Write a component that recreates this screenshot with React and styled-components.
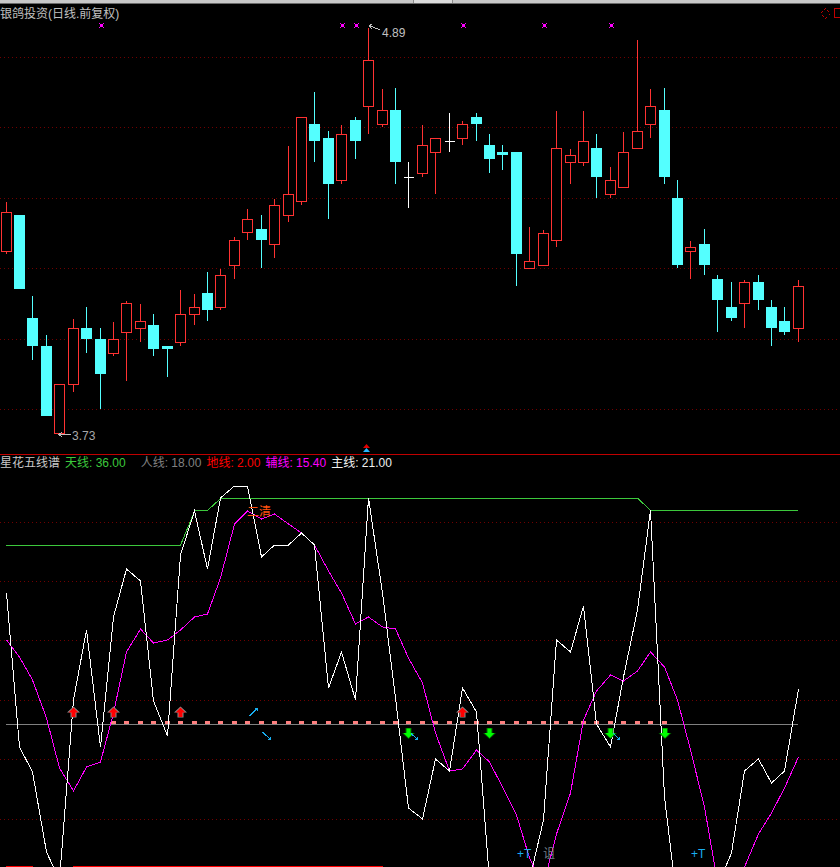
import React from "react";
import styled, { createGlobalStyle } from "styled-components";

const GlobalStyle = createGlobalStyle`
  html, body {
    margin: 0;
    padding: 0;
    background: #000;
  }
`;

const RED = "#ff3232";
const CYAN = "#54ffff";
const FONT = `"Liberation Sans", "Noto Sans CJK SC", sans-serif`;

// [x, body-top, body-bottom, wick-top, wick-bottom, kind]
const candles = [
  [6.5, 212, 252, 202, 254, "u"], [19.5, 215, 289, 215, 289, "d"], [32.5, 318, 346, 296, 360, "d"],
  [46.5, 346, 416, 335, 416, "d"], [59.5, 384, 434, 384, 434, "u"], [73.5, 328, 385, 319, 392, "u"],
  [86.5, 328, 339, 307, 353, "d"], [100.5, 339, 374, 328, 409, "d"], [113.5, 339, 354, 322, 356, "u"],
  [126.5, 303, 333, 301, 381, "u"], [140.5, 321, 329, 304, 342, "u"], [153.5, 325, 349, 314, 356, "d"],
  [167.5, 346, 349, 346, 377, "d"], [180.5, 314, 343, 290, 346, "u"], [194.5, 307, 315, 294, 325, "u"],
  [207.5, 293, 310, 272, 321, "d"], [220.5, 275, 308, 269, 310, "u"], [234.5, 240, 266, 237, 279, "u"],
  [247.5, 219, 233, 209, 240, "u"], [261.5, 229, 240, 215, 268, "d"], [274.5, 205, 245, 199, 258, "u"],
  [288.5, 194, 216, 146, 222, "u"], [301.5, 117, 202, 117, 205, "u"], [314.5, 124, 141, 92, 162, "d"],
  [328.5, 138, 184, 131, 219, "d"], [341.5, 134, 181, 125, 184, "u"], [355.5, 120, 141, 117, 159, "d"],
  [368.5, 60, 107, 28, 134, "u"], [382.5, 110, 125, 89, 127, "u"], [395.5, 110, 162, 88, 184, "d"],
  [408.5, 177, 177, 162, 208, "n"], [422.5, 145, 174, 125, 177, "u"], [435.5, 138, 153, 138, 194, "u"],
  [449.5, 141, 141, 113, 152, "n"], [462.5, 124, 139, 121, 145, "u"], [476.5, 117, 124, 113, 141, "d"],
  [489.5, 145, 159, 134, 173, "d"], [502.5, 152, 155, 145, 170, "d"], [516.5, 152, 254, 152, 286, "d"],
  [529.5, 261, 269, 227, 269, "u"], [543.5, 233, 266, 230, 266, "u"], [556.5, 148, 241, 111, 247, "u"],
  [570.5, 155, 163, 149, 184, "u"], [583.5, 141, 163, 111, 166, "u"], [596.5, 148, 177, 134, 198, "d"],
  [610.5, 180, 195, 167, 198, "u"], [623.5, 152, 188, 132, 188, "u"], [637.5, 131, 149, 40, 149, "u"],
  [650.5, 106, 125, 89, 138, "u"], [664.5, 110, 177, 88, 184, "d"], [677.5, 198, 265, 180, 268, "d"],
  [690.5, 247, 252, 241, 279, "u"], [704.5, 244, 265, 229, 275, "d"], [717.5, 279, 300, 275, 332, "d"],
  [731.5, 307, 318, 282, 321, "d"], [744.5, 282, 304, 280, 328, "u"], [758.5, 282, 300, 275, 310, "d"],
  [771.5, 307, 328, 300, 346, "d"], [784.5, 321, 332, 307, 335, "d"], [798.5, 286, 329, 280, 342, "u"],
];

const xs = candles.map((c) => c[0]);

const mainLine = [
  593, 747, 772, 852, 880, 700, 630, 747, 617, 569, 581, 701, 736, 555, 511, 569, 498, 486, 486, 557,
  545, 545, 533, 545, 688, 652, 700, 498, 593, 698, 808, 819, 759, 771, 688, 712, 880, 890, 890, 880,
  820, 640, 652, 606, 724, 747, 677, 610, 510, 797, 906, 900, 900, 886, 853, 771, 759, 783, 771, 689,
];

const auxLine = [
  640, 657, 680, 718, 768, 791, 767, 762, 713, 652, 629, 643, 640, 630, 617, 614, 578, 524, 511, 519,
  514, 524, 533, 545, 571, 593, 624, 617, 627, 629, 658, 683, 733, 771, 769, 750, 762, 787, 815, 858,
  885, 834, 793, 720, 691, 675, 681, 671, 652, 667, 700, 750, 807, 882, 900, 867, 834, 813, 788, 757,
];

const heavenLine = "6,545 180.5,545 195,510.5 207.5,510.5 220.5,498.5 638,498.5 650.5,510.5 798,510.5";

const priceGrid = [57.5, 127.5, 198.5, 268.5, 339.5, 409.5];
const indicatorGrid = [522.5, 581.5, 640.5, 700.5, 759.5, 819.5];
const magentaMarks = [101, 342, 356, 463, 544, 611];
const upArrows = [73.5, 113.5, 180.5, 462.5];
const downArrows = [408.5, 489.5, 610.5, 665];

const toPoints = (ys) => ys.map((y, i) => `${xs[i]},${y}`).join(" ");

const arrowPoints = (x, tip, dir, head, shaft, headLen, len) =>
  [
    [x, tip],
    [x + head, tip + dir * headLen],
    [x + shaft, tip + dir * headLen],
    [x + shaft, tip + dir * len],
    [x - shaft, tip + dir * len],
    [x - shaft, tip + dir * headLen],
    [x - head, tip + dir * headLen],
  ]
    .map((p) => p.join(","))
    .join(" ");

const Frame = styled.div`
  width: 840px;
  height: 867px;
  background: #000;
  overflow: hidden;
  display: flex;
  flex-direction: column;
  font-family: ${FONT};
`;

const TitleStrip = styled.div`
  height: 4px;
  flex: none;
  display: flex;
  background: #c8c8c8;
  border-bottom: 1px solid #6a6a6a;
  box-sizing: border-box;
`;

const StripTab = styled.div`
  width: 38px;
  margin-left: 413px;
  background: #dcdcdc;
  border-left: 1px solid #8c8c8c;
  border-right: 1px solid #8c8c8c;
`;

const PricePane = styled.div`
  position: relative;
  height: 450px;
  flex: none;
`;

const PaneTitle = styled.div`
  position: absolute;
  left: 0;
  top: 3px;
  font-size: 12px;
  line-height: 15px;
  color: #c0c0c0;
  white-space: nowrap;
`;

const Chart = styled.svg`
  display: block;
  width: 840px;
  height: ${(p) => p.$height}px;
`;

const ChartLabel = styled.text`
  font-family: ${FONT};
  font-size: ${(p) => p.$size || 12}px;
  fill: ${(p) => p.$color || "#c0c0c0"};
`;

const GridLine = styled.line`
  stroke: #700000;
  stroke-dasharray: 1 3;
`;

const IndicatorPane = styled.div`
  flex: none;
  border-top: 1px solid #c00000;
`;

const Legend = styled.div`
  display: flex;
  align-items: flex-end;
  height: 16px;
  font-size: 12px;
  line-height: 15px;
  white-space: nowrap;
`;

const LegendName = styled.span`
  color: #c8c8c8;
  width: 65px;
  flex: none;
`;

const LegendItem = styled.span`
  color: ${(p) => p.$color};
  margin-right: ${(p) => p.$gap}px;
`;

function Candle({ data }) {
  const [x, y1, y2, w1, w2, kind] = data;
  if (kind === "n") {
    return (
      <g stroke="#fff" shapeRendering="crispEdges">
        <line x1={x} x2={x} y1={w1} y2={w2} />
        <line x1={x - 5} x2={x + 5} y1={y1 + 0.5} y2={y1 + 0.5} />
      </g>
    );
  }
  const bx = Math.floor(x) - 5;
  if (kind === "d") {
    return (
      <g shapeRendering="crispEdges">
        <line x1={x} x2={x} y1={w1} y2={w2} stroke={CYAN} />
        <rect x={bx} y={y1} width={11} height={y2 - y1} fill={CYAN} />
      </g>
    );
  }
  return (
    <g shapeRendering="crispEdges" stroke={RED}>
      <line x1={x} x2={x} y1={w1} y2={y1} />
      <line x1={x} x2={x} y1={y2} y2={w2} />
      <rect x={bx + 0.5} y={y1 + 0.5} width={10} height={y2 - y1 - 1} fill="#000" />
    </g>
  );
}

function Mark({ x, y }) {
  return (
    <g fill="#ff00ff" shapeRendering="crispEdges">
      <rect x={x - 1} y={y - 1} width={3} height={3} />
      <rect x={x - 2} y={y - 2} width={1} height={1} />
      <rect x={x + 2} y={y - 2} width={1} height={1} />
      <rect x={x - 2} y={y + 2} width={1} height={1} />
      <rect x={x + 2} y={y + 2} width={1} height={1} />
    </g>
  );
}

function UpArrow({ x, y }) {
  return (
    <g>
      <polygon points={arrowPoints(x, y, 1, 6.5, 3, 6, 11)} fill="#8c8c8c" />
      <polygon points={arrowPoints(x, y + 1, 1, 5, 2, 5, 9.5)} fill="#ff0000" />
    </g>
  );
}

function DownArrow({ x, y }) {
  return (
    <g>
      <polygon points={arrowPoints(x, y + 11, -1, 6.5, 3, 6, 11)} fill="#006400" />
      <polygon points={arrowPoints(x, y + 10, -1, 5, 2, 5, 9.5)} fill="#00ff00" />
    </g>
  );
}

function SlantArrow({ x1, y1, x2, y2, up }) {
  const hy = up ? y2 + 3 : y2 - 3;
  return (
    <g stroke="#18aef0" fill="none" shapeRendering="crispEdges">
      <line x1={x1} y1={y1} x2={x2} y2={y2} />
      <polyline points={`${x2 - 3},${y2} ${x2},${y2} ${x2},${hy}`} />
    </g>
  );
}

export default function App() {
  return (
    <>
      <GlobalStyle />
      <Frame>
        <TitleStrip>
          <StripTab />
        </TitleStrip>
        <PricePane>
          <PaneTitle>银鸽投资(日线.前复权)</PaneTitle>
          <Chart $height={450} viewBox="0 4 840 450">
            {priceGrid.map((y) => (
              <GridLine key={y} x1="0" x2="840" y1={y} y2={y} />
            ))}
            {candles.map((c) => (
              <Candle key={c[0]} data={c} />
            ))}
            {magentaMarks.map((x) => (
              <Mark key={x} x={x} y={25} />
            ))}
            <g stroke="#c0c0c0" fill="none" shapeRendering="crispEdges">
              <polyline points="380,30 373,27 369,26" />
              <polyline points="372,24 369,26 372,29" />
              <line x1="59" x2="71" y1="434.5" y2="434.5" />
              <polyline points="62,432 59,434.5 62,437" />
            </g>
            <ChartLabel x="382" y="37">4.89</ChartLabel>
            <ChartLabel x="72" y="440" $color="#a8a8a8">3.73</ChartLabel>
            <polygon points="366.5,444 370,448 363,448" fill="#e00000" />
            <polygon points="366.5,448 370,452 363,452" fill="#28b4ff" />
            <g fill="none" stroke="#c00000" shapeRendering="crispEdges">
              <polygon points="825.5,8.5 830.5,13.5 825.5,18.5 820.5,13.5" strokeDasharray="1 1" />
              <rect x="834.5" y="8.5" width="8" height="9" />
            </g>
          </Chart>
        </PricePane>
        <IndicatorPane>
          <Legend>
            <LegendName>星花五线谱</LegendName>
            <LegendItem $color="#3cc83c" $gap={15}>天线: 36.00</LegendItem>
            <LegendItem $color="#808080" $gap={5}>人线: 18.00</LegendItem>
            <LegendItem $color="#ff0000" $gap={5}>地线: 2.00</LegendItem>
            <LegendItem $color="#ff00ff" $gap={5}>辅线: 15.40</LegendItem>
            <LegendItem $color="#f0f0f0" $gap={0}>主线: 21.00</LegendItem>
          </Legend>
          <Chart $height={396} viewBox="0 471 840 396">
            {indicatorGrid.map((y) => (
              <GridLine key={y} x1="0" x2="840" y1={y} y2={y} />
            ))}
            <line x1="6" x2="798" y1="724.5" y2="724.5" stroke="#808080" shapeRendering="crispEdges" />
            {xs.slice(8, 50).map((x) => (
              <rect key={x} x={Math.floor(x) - 2} y="721" width="5" height="3" fill="#ff8080" shapeRendering="crispEdges" />
            ))}
            <polyline points={heavenLine} fill="none" stroke="#3cc83c" shapeRendering="crispEdges" />
            <polyline points={toPoints(auxLine)} fill="none" stroke="#ff00ff" shapeRendering="crispEdges" />
            <polyline points={toPoints(mainLine)} fill="none" stroke="#fff" shapeRendering="crispEdges" />
            <ChartLabel x="247" y="516" $color="#ff5010">二清</ChartLabel>
            {upArrows.map((x) => (
              <UpArrow key={x} x={x} y={706.5} />
            ))}
            {downArrows.map((x) => (
              <DownArrow key={x} x={x} y={728} />
            ))}
            <SlantArrow x1={249.5} y1={716} x2={257.5} y2={708} up />
            <SlantArrow x1={262.5} y1={732} x2={270.5} y2={739.5} />
            <SlantArrow x1={411} y1={733.5} x2={417.5} y2={739.5} />
            <SlantArrow x1={613.5} y1={733.5} x2={619.5} y2={739.5} />
            <ChartLabel x="517" y="858" $color="#18aef0">+T</ChartLabel>
            <ChartLabel x="543" y="858" $color="#78808c">诅</ChartLabel>
            <ChartLabel x="691" y="858" $color="#18aef0">+T</ChartLabel>
            <g fill="#ff0000" shapeRendering="crispEdges">
              <rect x="6" y="866" width="27" height="1" />
              <rect x="73" y="866" width="310" height="1" />
            </g>
          </Chart>
        </IndicatorPane>
      </Frame>
    </>
  );
}
